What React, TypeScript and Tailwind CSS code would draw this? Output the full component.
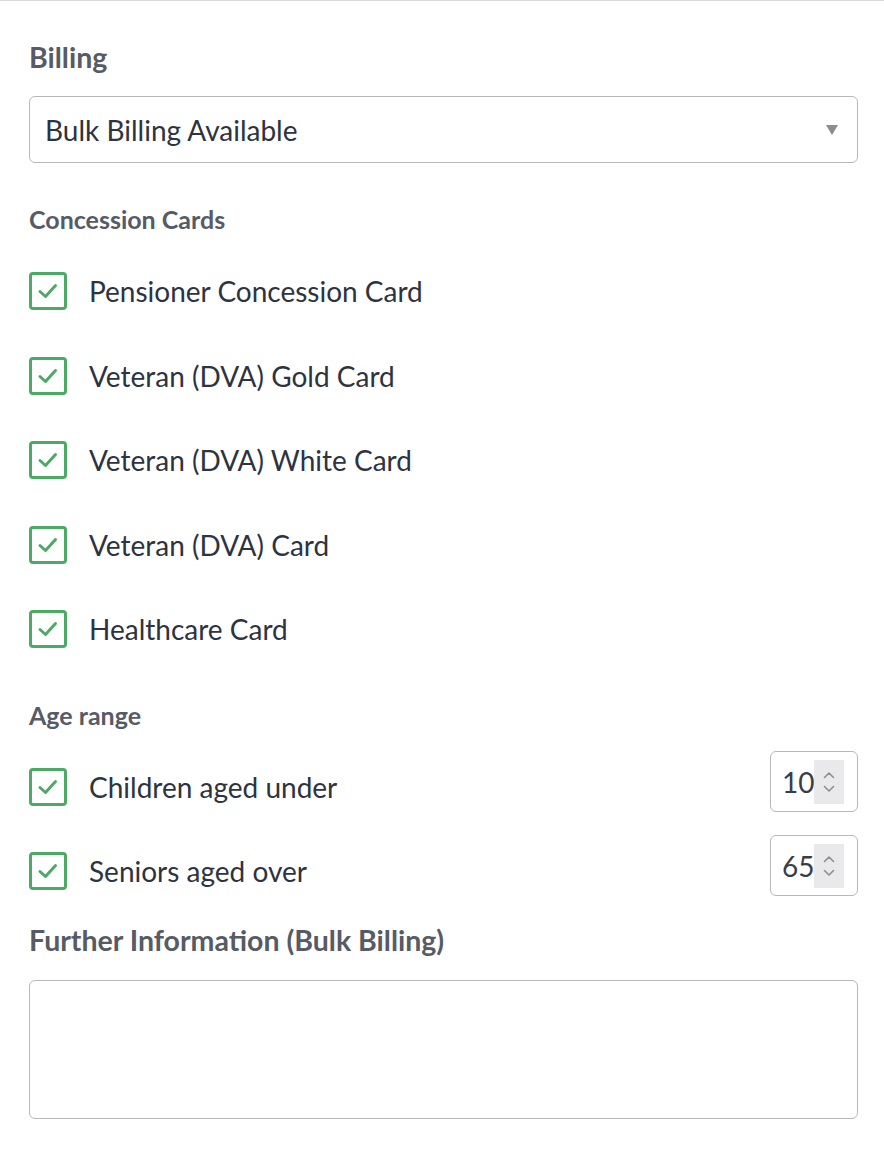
import React from 'react';

const cards = [
  'Pensioner Concession Card',
  'Veteran (DVA) Gold Card',
  'Veteran (DVA) White Card',
  'Veteran (DVA) Card',
  'Healthcare Card',
];

const CheckBox = () => (
  <span className="w-[38px] h-[38px] shrink-0 rounded-[4px] border-[3px] border-[#4caa66] bg-white flex items-center justify-center">
    <svg width="24" height="24" viewBox="0 0 24 24" fill="none">
      <path d="M4 12.5 L9.5 17.5 L19.5 6.5" stroke="#4caa66" strokeWidth="3" strokeLinecap="round" strokeLinejoin="round" />
    </svg>
  </span>
);

const NumberBox = ({ value }: { value: string }) => (
  <div className="w-[88px] h-[61px] rounded-[6px] border-[1.5px] border-[#b8b8bc] bg-white flex items-center pl-[11px]">
    <span className="text-[28px] text-[#3a3d44] leading-none">{value}</span>
    <span className="w-[30px] h-[44px] bg-[#e9e9eb] flex flex-col items-center justify-center gap-[6px]">
      <svg width="12" height="8" viewBox="0 0 12 8" fill="none">
        <path d="M1.5 6.5 L6 2 L10.5 6.5" stroke="#8d8d92" strokeWidth="1.6" strokeLinecap="round" strokeLinejoin="round" />
      </svg>
      <svg width="12" height="8" viewBox="0 0 12 8" fill="none">
        <path d="M1.5 1.5 L6 6 L10.5 1.5" stroke="#8d8d92" strokeWidth="1.6" strokeLinecap="round" strokeLinejoin="round" />
      </svg>
    </span>
  </div>
);

export default function App() {
  return (
    <div className="min-h-screen bg-white border-t border-[#d9d9db] font-['Lato',sans-serif]">
      <div className="pl-[29px] pr-[26px] pb-[40px]">
        <h2 className="mt-[40px] text-[28.5px] leading-[32px] font-bold text-[#565b65]">Billing</h2>

        <div className="mt-[23px] h-[67px] rounded-[6px] border-[1.5px] border-[#b8b8bc] bg-white flex items-center justify-between pl-[15px] pr-[19px]">
          <span className="text-[28px] text-[#2d3340]">Bulk Billing Available</span>
          <svg width="12" height="10" viewBox="0 0 12 10">
            <path d="M0 0 H12 L6 10 Z" fill="#8c8c8f" />
          </svg>
        </div>

        <h3 className="mt-[41px] text-[25px] leading-[30px] font-bold text-[#565b65]">Concession Cards</h3>

        <div className="mt-[38px] flex flex-col gap-[46.5px]">
          {cards.map((c) => (
            <label key={c} className="flex items-center h-[38px] gap-[22px]">
              <CheckBox />
              <span className="text-[28px] text-[#2d3340]">{c}</span>
            </label>
          ))}
        </div>

        <h3 className="mt-[52px] text-[25px] leading-[30px] font-bold text-[#565b65]">Age range</h3>

        <div className="mt-[21px] flex flex-col gap-[23px]">
          <div className="flex items-center justify-between">
            <label className="flex items-center gap-[22px] pt-[11px]">
              <CheckBox />
              <span className="text-[28px] text-[#2d3340]">Children aged under</span>
            </label>
            <NumberBox value="10" />
          </div>
          <div className="flex items-center justify-between">
            <label className="flex items-center gap-[22px] pt-[11px]">
              <CheckBox />
              <span className="text-[28px] text-[#2d3340]">Seniors aged over</span>
            </label>
            <NumberBox value="65" />
          </div>
        </div>

        <h2 className="mt-[28px] text-[28.5px] leading-[32px] font-bold text-[#565b65]">Further Information (Bulk Billing)</h2>

        <textarea className="mt-[24px] block w-full h-[139px] rounded-[6px] border-[1.5px] border-[#b8b8bc] bg-white resize-none outline-none" />
      </div>
    </div>
  );
}
